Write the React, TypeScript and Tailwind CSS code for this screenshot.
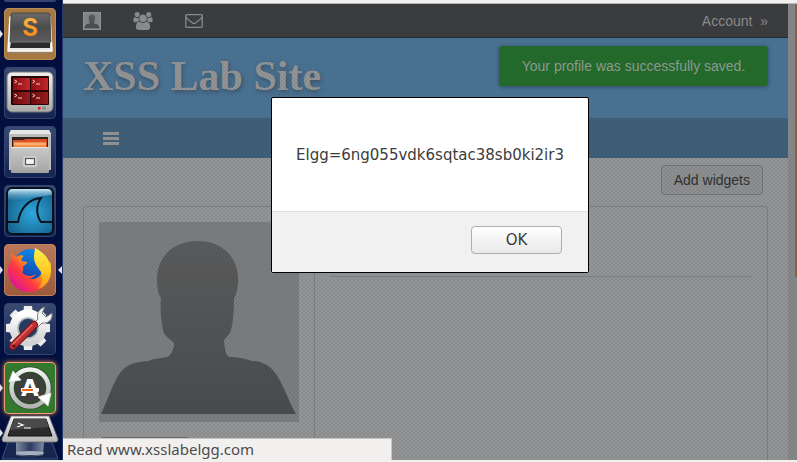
import type { ReactNode } from "react";

const TILE = "block size-full";

function SublimeIcon() {
  return (
    <svg viewBox="0 0 52 52" className={TILE}>
      <defs>
        <linearGradient id="subTop" x1="0" y1="0" x2="0" y2="1">
          <stop offset="0" stopColor="#6a6a6a" />
          <stop offset="0.5" stopColor="#4c4c4c" />
          <stop offset="1" stopColor="#5c5c5c" />
        </linearGradient>
        <linearGradient id="subS" x1="0" y1="0" x2="0" y2="1">
          <stop offset="0" stopColor="#ffc04a" />
          <stop offset="1" stopColor="#f07c10" />
        </linearGradient>
      </defs>
      <path d="M6 9H46L48 43H4Z" fill="#e9e7e4" stroke="#fff" strokeWidth="1.500" strokeLinejoin="round" />
      <path d="M4 44.500H48" stroke="#8d8375" />
      <path d="M7 34H46L46 40H6Z" fill="#2b2b2b" />
      <path d="M9 5H44Q46 5 46 7L47 34H6L7 7Q7 5 9 5Z" fill="url(#subTop)" stroke="#383838" strokeWidth="0.700" />
      <path d="M6 34H47" stroke="#8a8a8a" strokeWidth="0.800" />
      <text x="26" y="28" textAnchor="middle" fontFamily="Inter, sans-serif" fontWeight="700" fontSize="24" fill="url(#subS)">
        S
      </text>
    </svg>
  );
}

function TerminatorIcon() {
  const cells = [
    [9, 11],
    [27, 11],
    [9, 25],
    [27, 25],
  ];
  return (
    <svg viewBox="0 0 52 52" className={TILE}>
      <defs>
        <linearGradient id="monitor" x1="0" y1="0" x2="0" y2="1">
          <stop offset="0" stopColor="#f0f0ea" />
          <stop offset="1" stopColor="#a9aba6" />
        </linearGradient>
        <linearGradient id="redCell" x1="0" y1="0" x2="1" y2="0">
          <stop offset="0" stopColor="#8d0d10" />
          <stop offset="1" stopColor="#c2282b" />
        </linearGradient>
      </defs>
      <rect x="3" y="5" width="46" height="40" rx="5" fill="url(#monitor)" stroke="#75777a" />
      <rect x="7" y="9" width="38" height="29" rx="1" fill="#2a0506" />
      {cells.map(([x, y], i) => (
        <g key={i}>
          <rect x={x} y={y} width="17" height="12" fill="url(#redCell)" opacity={i > 1 ? 0.7 : 1} />
          <path d={`M${x + 1.5} ${y + 2}l2.500 1.500l-2.500 1.500M${x + 5} ${y + 6}h4`} stroke="#f2d0d0" strokeWidth="1" fill="none" />
        </g>
      ))}
      <rect x="34" y="40" width="2.500" height="2.500" fill="#e01b1b" />
      <rect x="38" y="39.500" width="4" height="3" fill="#8b8d89" />
    </svg>
  );
}

function FilesIcon() {
  return (
    <svg viewBox="0 0 52 52" className={TILE}>
      <defs>
        <linearGradient id="cabinet" x1="0" y1="0" x2="0" y2="1">
          <stop offset="0" stopColor="#c9c9c9" />
          <stop offset="1" stopColor="#a3a3a3" />
        </linearGradient>
      </defs>
      <path d="M7 4H45L47 8V44H5V8Z" fill="#bcbcbc" />
      <path d="M7 4H45L47 8H5Z" fill="#e6e6e6" />
      <rect x="8" y="11" width="36" height="10" fill="#33221c" />
      <path d="M9 14H20L21 13H43V21H9Z" fill="#d9502a" />
      <path d="M10 16H42V21H10Z" fill="#f58a42" />
      <path d="M10 18H42" stroke="#ffd3a8" strokeWidth="1" />
      <rect x="7" y="21" width="38" height="26" rx="1" fill="url(#cabinet)" />
      <path d="M7 21.500H45" stroke="#e4e4e4" />
      <rect x="19" y="30" width="14" height="11" rx="2" fill="#d6d6d6" stroke="#bfbfbf" />
      <rect x="21.500" y="32.500" width="9" height="6" fill="#f4f4f4" stroke="#555" strokeWidth="1.200" />
    </svg>
  );
}

function SharkIcon() {
  return (
    <svg viewBox="0 0 52 52" className={TILE}>
      <defs>
        <radialGradient id="sea" cx="0.55" cy="0.55" r="0.6">
          <stop offset="0" stopColor="#2fa6dc" />
          <stop offset="1" stopColor="#16648f" />
        </radialGradient>
        <linearGradient id="seaGloss" x1="0" y1="0" x2="0" y2="1">
          <stop offset="0" stopColor="#d5ebf7" />
          <stop offset="1" stopColor="#3a94c2" stopOpacity="0" />
        </linearGradient>
      </defs>
      <rect x="3" y="3" width="46" height="46" rx="5" fill="url(#sea)" stroke="#05101a" strokeWidth="2" />
      <path d="M4 9Q4 4 9 4H43Q48 4 48 9V10Q26 12 4 17Z" fill="url(#seaGloss)" />
      <path d="M4 37H14C16 25 23 14 37 13C32 20 32 30 37 37H48" fill="none" stroke="#07141d" strokeWidth="2" />
    </svg>
  );
}

function FirefoxIcon() {
  return (
    <svg viewBox="0 0 52 52" className={TILE}>
      <defs>
        <linearGradient id="fox" x1="0.9" y1="0.1" x2="0.15" y2="0.8">
          <stop offset="0" stopColor="#ffd83a" />
          <stop offset="0.4" stopColor="#ff9a1c" />
          <stop offset="0.7" stopColor="#ff3b3e" />
          <stop offset="1" stopColor="#e5188a" />
        </linearGradient>
        <linearGradient id="globe" x1="0.7" y1="0" x2="0.3" y2="1">
          <stop offset="0" stopColor="#0f8ee8" />
          <stop offset="1" stopColor="#143aa5" />
        </linearGradient>
        <linearGradient id="flame" x1="0.5" y1="0" x2="0.5" y2="1">
          <stop offset="0" stopColor="#fff04a" />
          <stop offset="0.6" stopColor="#ffc722" />
          <stop offset="1" stopColor="#ff9416" />
        </linearGradient>
      </defs>
      <circle cx="26" cy="21" r="16" fill="url(#globe)" />
      <path
        d="M8 8C9 11 11 12 12 13C15 11 18 11 20 12C18 13 17 15 18 17L23 18C24 20 20 21 19 23C19 25 20 26 18 28C21 33 28 33 32 30C29 34 27 35 24 34C33 38 40 30 39 21C42 24 45 21 46 17C50 33 41 48 26 48C12 48 4 37 4 27C4 21 6 19 7 17C7 13 7 10 8 8Z"
        fill="url(#fox)"
      />
      <path d="M31 4C39 8 47 15 47 27C47 36 41 43 34 45C39 39 39 33 37 28C34 23 30 20 30 13C30 9 31 7 31 4Z" fill="url(#flame)" />
    </svg>
  );
}

function SettingsIcon() {
  const teeth = [0, 45, 90, 135, 180, 225, 270, 315];
  return (
    <svg viewBox="0 0 52 52" className={TILE}>
      <defs>
        <linearGradient id="gear" x1="0" y1="0" x2="0" y2="1">
          <stop offset="0" stopColor="#ffffff" />
          <stop offset="1" stopColor="#d2d2d2" />
        </linearGradient>
      </defs>
      {teeth.map((a) => (
        <path key={a} d="M20 3H28L29 12H19Z" fill="#ececec" transform={`rotate(${a} 24 25)`} />
      ))}
      <circle cx="24" cy="25" r="14" fill="none" stroke="url(#gear)" strokeWidth="9" />
      <circle cx="24" cy="25" r="10" fill="#263c60" stroke="#aeb4bc" strokeWidth="1.500" />
      <path d="M29 21L34 16C32 10 36 5 41 4L38 10L42 14L48 10C49 17 44 21 38 20L33 25Z" fill="#f4f4f4" stroke="#777" strokeWidth="1" strokeLinejoin="round" />
      <path d="M9 43L30 22" stroke="#731418" strokeWidth="8" strokeLinecap="round" />
      <path d="M9 43L30 22" stroke="#bf2f32" strokeWidth="6" strokeLinecap="round" />
      <path d="M9 41L28 22" stroke="#e06b6a" strokeWidth="1.500" strokeLinecap="round" />
      <circle cx="10" cy="43" r="1.500" fill="#4f0d10" />
    </svg>
  );
}

function UpdaterIcon() {
  return (
    <svg viewBox="0 0 52 52" className={TILE}>
      <defs>
        <linearGradient id="ring" x1="0" y1="0" x2="0" y2="1">
          <stop offset="0" stopColor="#f1f1f1" />
          <stop offset="1" stopColor="#b4b4b4" />
        </linearGradient>
      </defs>
      <circle cx="26" cy="26" r="18" fill="#3d3f3c" stroke="#2c4b28" strokeWidth="7" />
      <circle cx="26" cy="26" r="18.500" fill="none" stroke="url(#ring)" strokeWidth="4.500" />
      <path d="M5 20L9 9L17 18Z" fill="#fff" stroke="#dcdcdc" />
      <path d="M47 31L44 44L34 35Z" fill="#fff" stroke="#dcdcdc" />
      <text x="26" y="34" textAnchor="middle" fontFamily="'DejaVu Sans', sans-serif" fontWeight="700" fontSize="23" fill="#fff">
        A
      </text>
      <rect x="17" y="26" width="18" height="4" rx="1" fill="#fff" />
      <rect x="18" y="27" width="11" height="2" fill="#f0661e" />
    </svg>
  );
}

function TerminalIcon() {
  return (
    <svg viewBox="0 0 60 46" className={TILE}>
      <defs>
        <linearGradient id="beam" x1="0" y1="0" x2="1" y2="0">
          <stop offset="0" stopColor="#7f8aa1" />
          <stop offset="0.5" stopColor="#2c3b62" />
          <stop offset="1" stopColor="#7f8aa1" />
        </linearGradient>
        <linearGradient id="bezel" x1="0" y1="0" x2="0" y2="1">
          <stop offset="0" stopColor="#f2f2f2" />
          <stop offset="1" stopColor="#b5b5b5" />
        </linearGradient>
      </defs>
      <path d="M8 27H52L58 44H2Z" fill="#16264f" stroke="#3f4f78" />
      <path d="M16 27H44L43 40Q30 43 16 40Z" fill="url(#beam)" />
      <ellipse cx="30" cy="38" rx="14" ry="2" fill="#a9b1c0" />
      <path d="M11 1H49L58 24Q58 27 56 27H4Q2 27 2 24Z" fill="url(#bezel)" stroke="#6b6b6b" strokeWidth="0.800" />
      <path d="M14 4H46L52 21H8Z" fill="#2c2c2c" stroke="#111" />
      <path d="M14 4H46L49 12L10 15Z" fill="#4a4a4a" />
      <path d="M18 8l5 2l-6 2M24 13h7" stroke="#fff" strokeWidth="1.200" fill="none" />
    </svg>
  );
}

type App = { name: string; tile: string; icon: ReactNode; open?: boolean; focused?: boolean };

const NAVY_TILE = "ring-[#33456f] bg-linear-to-b from-[#3a4a73] to-[#142450]";

const APPS: App[] = [
  { name: "Sublime Text", tile: "ring-[#b98c56] bg-[#a67842]", icon: <SublimeIcon />, open: true },
  { name: "Terminator", tile: NAVY_TILE, icon: <TerminatorIcon /> },
  { name: "Files", tile: NAVY_TILE, icon: <FilesIcon /> },
  { name: "Wireshark", tile: NAVY_TILE, icon: <SharkIcon /> },
  { name: "Firefox", tile: "ring-[#c08062] bg-linear-to-b from-[#b9795a] to-[#9c5a3c]", icon: <FirefoxIcon />, open: true, focused: true },
  { name: "System Settings", tile: NAVY_TILE, icon: <SettingsIcon /> },
  { name: "Software Updater", tile: "ring-[#f0a070] bg-[#33782f] shadow-[0_0_5px_#e8834e]", icon: <UpdaterIcon />, open: true },
];

function Launcher() {
  return (
    <nav aria-label="Launcher" className="flex w-[63px] shrink-0 flex-col items-start gap-[7px] border-r border-[#26386b] bg-[#02103f] pl-1">
      <div className="-mb-px h-0.5 w-[52px] shrink-0 rounded-b bg-[#33456f]" />
      {APPS.map((app) => (
        <button key={app.name} type="button" aria-label={app.name} className={`relative size-[52px] shrink-0 rounded-[5px] ring-1 ring-inset ${app.tile}`}>
          {app.icon}
          {app.open && <span className="absolute top-1/2 -left-1 -mt-1 border-y-4 border-l-[3px] border-y-transparent border-l-[#dfe3ea]" />}
          {app.focused && <span className="absolute top-1/2 -right-1.5 -mt-1 border-y-4 border-r-4 border-y-transparent border-r-[#dfe3ea]" />}
        </button>
      ))}
      <button type="button" aria-label="Terminal" className="relative -mt-1.5 -ml-1 h-[46px] w-[60px] shrink-0">
        <TerminalIcon />
        <span className="absolute top-3.5 left-0 border-y-4 border-l-[3px] border-y-transparent border-l-[#dfe3ea]" />
      </button>
    </nav>
  );
}

function Silhouette({ className }: { className: string }) {
  return (
    <svg viewBox="0 0 200 200" className={className} aria-hidden="true">
      <defs>
        <linearGradient id="person" x1="0" y1="0" x2="0" y2="1">
          <stop offset="0" stopColor="#5b5c5d" />
          <stop offset="1" stopColor="#4b4c4d" />
        </linearGradient>
      </defs>
      <path
        d="M99 19C124 19 139 36 139 57C139 65 138 72 135 76C135 90 134 100 132 108C131 114 125 115 125 120C126 128 127 135 131 135C139 135 147 137 153 139C162 139 171 143 177 152C184 162 189 178 197 192H2C8 179 13 164 19 154C25 143 35 140 49 139C57 136 63 136 68 135C73 133 75 125 75 122C75 118 65 116 64 108C62 98 61 87 62 76C59 73 58 64 58 57C58 36 73 19 99 19Z"
        fill="url(#person)"
      />
    </svg>
  );
}

function UsersIcon() {
  return (
    <svg viewBox="0 0 1920 1792" className="block h-[18px] w-5" fill="currentColor">
      <path d="M593 896q-162 5-265 128h-134q-82 0-138-40.500t-56-118.500q0-353 124-353 6 0 43.500 21t97.500 42.500 119 21.500q67 0 133-23-5 37-5 66 0 139 81 256zm1071 637q0 120-73 189.500t-194 69.500h-874q-121 0-194-69.500t-73-189.500q0-53 3.500-103.500t14-109 26.500-108.500 43-97.500 62-81 85.500-53.500 111.500-20q10 0 43 21.500t73 48 107 48 135 21.500 135-21.500 107-48 73-48 43-21.500q61 0 111.500 20t85.500 53.500 62 81 43 97.500 26.500 108.500 14 109 3.500 103.500zm-1024-1277q0 106-75 181t-181 75-181-75-75-181 75-181 181-75 181 75 75 181zm704 384q0 159-112.500 271.500t-271.500 112.500-271.500-112.500-112.500-271.500 112.500-271.500 271.500-112.500 271.500 112.500 112.500 271.500zm576 225q0 78-56 118.500t-138 40.500h-134q-103-123-265-128 81-117 81-256 0-29-5-66 66 23 133 23 59 0 119-21.500t97.500-42.500 43.500-21q124 0 124 353zm-128-609q0 106-75 181t-181 75-181-75-75-181 75-181 181-75 181 75 75 181z" />
    </svg>
  );
}

function EnvelopeIcon() {
  return (
    <svg viewBox="0 256 1792 1408" className="block h-[14px] w-[18px]" fill="currentColor">
      <path d="M1664 1504v-768q-32 36-69 66-268 206-426 338-51 43-83 67t-86.500 48.500-102.500 24.500h-2q-48 0-102.500-24.500t-86.500-48.500-83-67q-158-132-426-338-37-30-69-66v768q0 13 9.500 22.500t22.500 9.500h1472q13 0 22.500-9.500t9.500-22.500zm0-1051v-24.500l-.5-13-3-12.500-5.500-9-9-7.500-14-2.500h-1472q-13 0-22.500 9.500t-9.500 22.500q0 168 147 284 193 152 401 317 6 5 35 29.500t46 37.500 44.500 31.500 50.500 27.500 43 9h2q20 0 43-9t50.500-27.500 44.500-31.500 46-37.500 35-29.500q208-165 401-317 54-43 100.500-115.500t46.500-131.500zm128-37v1088q0 66-47 113t-113 47h-1472q-66 0-113-47t-47-113v-1088q0-66 47-113t113-47h1472q66 0 113 47t47 113z" />
    </svg>
  );
}

function Page() {
  return (
    <div className="flex min-h-0 flex-1">
      <div className="flex min-w-0 flex-1 flex-col bg-[#929495] font-['Liberation_Sans',Arial,sans-serif]">
        <div className="flex h-[34px] shrink-0 items-center gap-8 border-b border-[#26292d] bg-[#3c3d3e] px-5 text-[#8b8d8f]">
          <a href="#profile" aria-label="Profile" className="size-[18px] border border-[#939597] bg-[#858789]">
            <Silhouette className="block size-full" />
          </a>
          <a href="#friends" aria-label="Friends">
            <UsersIcon />
          </a>
          <a href="#messages" aria-label="Messages">
            <EnvelopeIcon />
          </a>
          <a href="#account" className="ml-auto text-[14px] leading-5">
            Account&nbsp; »
          </a>
        </div>
        <header className="flex h-20 shrink-0 items-start justify-between bg-[#4b7394] px-5">
          <h1 className="pt-3 font-['Liberation_Serif','Times_New_Roman',serif] text-[42px] leading-[52px] font-bold whitespace-nowrap text-[#929495] [text-shadow:1px_2px_4px_#3a5163]">
            XSS Lab Site
          </h1>
          <p role="status" className="mt-2 min-w-[269px] rounded-[3px] bg-[#246c2b] px-5 py-2.5 text-center text-[14px] leading-5 whitespace-nowrap text-[#8f9c93] shadow-[0_1px_4px_rgba(0,0,0,0.35)]">
            Your profile was successfully saved.
          </p>
        </header>
        <div className="flex h-10 shrink-0 items-center bg-[#405f79] px-10">
          <button type="button" aria-label="Menu" className="flex w-4 flex-col gap-0.5">
            <span className="h-[3px] bg-[#929495]" />
            <span className="h-[3px] bg-[#929495]" />
            <span className="h-[3px] bg-[#929495]" />
          </button>
        </div>
        <div className="flex shrink-0 justify-end px-[25px] pt-[7px] pb-[11px]">
          <button type="button" className="rounded-[3px] border border-[#727475] bg-[#8c8e8f] px-3 py-1 text-[14px] leading-5 text-[#303233]">
            Add widgets
          </button>
        </div>
        <div className="mx-5 flex min-h-0 flex-1 overflow-hidden rounded-t-[3px] border border-b-0 border-[#7d7f81]">
          <div className="border-r border-[#7d7f81] p-[15px]">
            <div className="size-[200px] bg-[#7b7d7e]">
              <Silhouette className="block size-full" />
            </div>
            <div className="mt-[15px] ml-px h-10 w-[90px] rounded-[3px] border border-[#6c6d6e]" />
          </div>
          <div className="flex-1 px-[15px] pt-[69px]">
            <hr className="border-[#7d7f81]" />
          </div>
        </div>
      </div>
      <div className="flex w-[9px] justify-end bg-[#868889]">
        <div className="h-[273px] w-0.5 bg-[#935f4b]" />
      </div>
    </div>
  );
}

function AlertDialog() {
  return (
    <div className="absolute inset-0 flex items-start justify-center bg-[conic-gradient(rgba(0,0,0,0.05)_25%,transparent_0_50%,rgba(0,0,0,0.05)_0_75%,transparent_0)] bg-[length:4px_4px] pt-[93px] font-['DejaVu_Sans',sans-serif] text-[15px] leading-5 text-[#3c3c3c]">
      <div role="alertdialog" aria-modal="true" aria-label="Page message" className="min-w-[318px] rounded-[2px] border border-black bg-white">
        <p className="px-5 pt-[47px] pb-[46px] text-center whitespace-nowrap">Elgg=6ng055vdk6sqtac38sb0ki2ir3</p>
        <div className="flex justify-end border-t border-[#dfdfdf] bg-[#f1f1f1] px-[26px] pt-[14px] pb-[18px]">
          <button type="button" className="h-7 w-[91px] rounded-[4px] border border-[#b0aeac] bg-linear-to-b from-white to-[#ebe9e8]">
            OK
          </button>
        </div>
      </div>
    </div>
  );
}

export default function App() {
  return (
    <div className="flex h-screen flex-col overflow-hidden bg-[#f2f0ef]">
      <div className="flex min-h-0 flex-1 overflow-hidden">
        <Launcher />
        <main className="relative flex min-w-0 flex-1 flex-col">
          <div className="h-1 shrink-0 border-b border-[#b9b7b5] bg-[#f2f0ef]" />
          <div className="relative flex min-h-0 flex-1 flex-col">
            <Page />
            <AlertDialog />
          </div>
          <div className="absolute bottom-0 left-0 h-[22px] w-[329px] border-t border-r border-[#c9c6c4] bg-[#f2f0ef] px-1 font-['Noto_Sans','Open_Sans',sans-serif] text-[15px] leading-5 whitespace-nowrap text-[#4c4c4c]">
            Read www.xsslabelgg.com
          </div>
        </main>
      </div>
      <div className="h-0.5 shrink-0 bg-[#f2f0ef]" />
    </div>
  );
}
